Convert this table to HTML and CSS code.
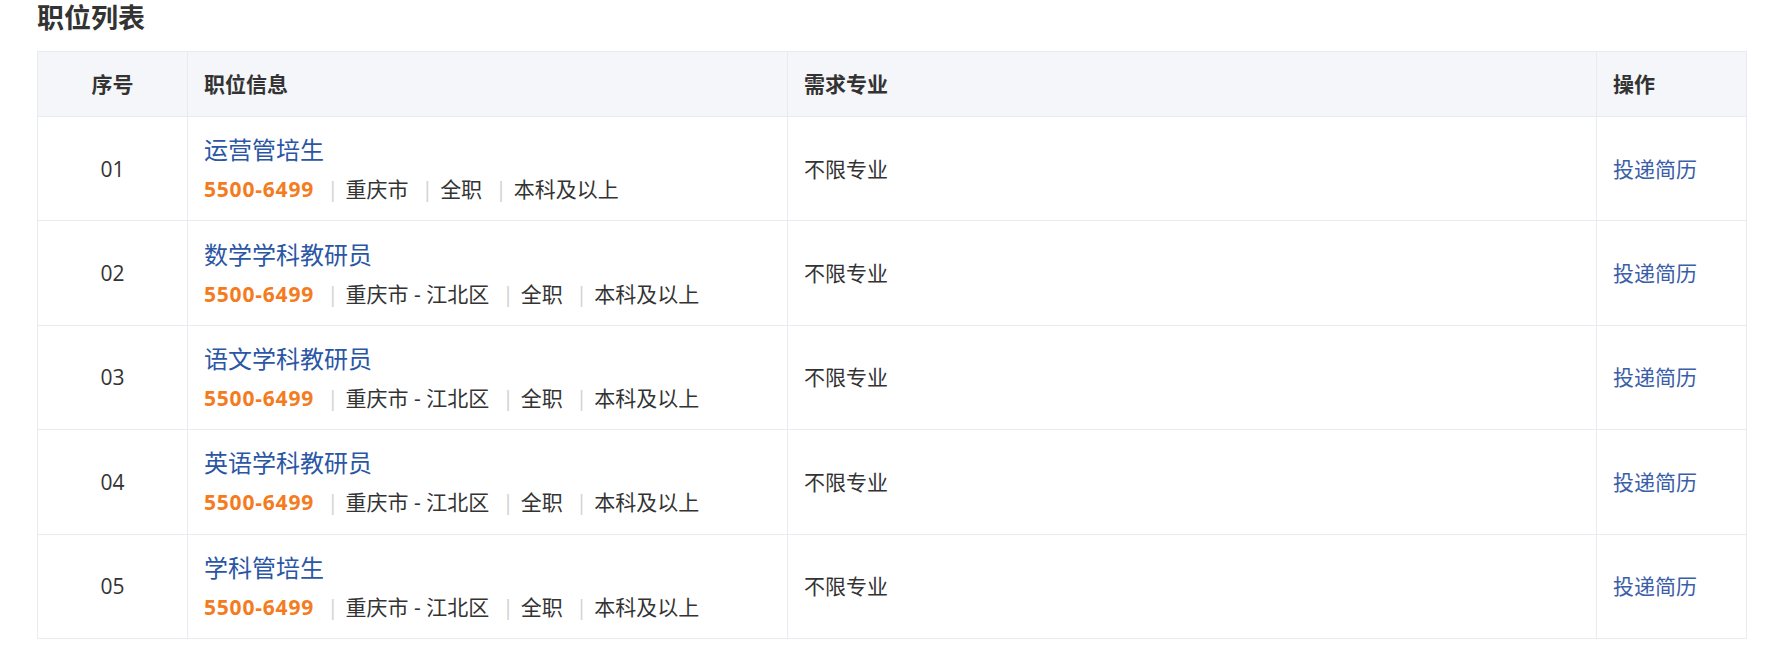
FILE: index.html
```html
<!DOCTYPE html>
<html lang="zh-CN">
<head>
<meta charset="utf-8">
<title>职位列表</title>
<link rel="stylesheet" href="styles.css">
</head>
<body>
<div class="page">
  <h2 class="page-title">职位列表</h2>
  <table class="job-table">
    <colgroup>
      <col class="col-no">
      <col class="col-info">
      <col class="col-major">
      <col class="col-op">
    </colgroup>
    <thead>
      <tr>
        <th class="cell-no">序号</th>
        <th>职位信息</th>
        <th>需求专业</th>
        <th>操作</th>
      </tr>
    </thead>
    <tbody>
      <tr>
        <td class="cell-no">01</td>
        <td>
          <div class="job-name">运营管培生</div>
          <div class="job-meta"><span class="salary">5500-6499</span><span class="sep">|</span><span>重庆市</span><span class="sep">|</span><span>全职</span><span class="sep">|</span><span>本科及以上</span></div>
        </td>
        <td>不限专业</td>
        <td><a class="apply" href="#">投递简历</a></td>
      </tr>
      <tr>
        <td class="cell-no">02</td>
        <td>
          <div class="job-name">数学学科教研员</div>
          <div class="job-meta"><span class="salary">5500-6499</span><span class="sep">|</span><span>重庆市 - 江北区</span><span class="sep">|</span><span>全职</span><span class="sep">|</span><span>本科及以上</span></div>
        </td>
        <td>不限专业</td>
        <td><a class="apply" href="#">投递简历</a></td>
      </tr>
      <tr>
        <td class="cell-no">03</td>
        <td>
          <div class="job-name">语文学科教研员</div>
          <div class="job-meta"><span class="salary">5500-6499</span><span class="sep">|</span><span>重庆市 - 江北区</span><span class="sep">|</span><span>全职</span><span class="sep">|</span><span>本科及以上</span></div>
        </td>
        <td>不限专业</td>
        <td><a class="apply" href="#">投递简历</a></td>
      </tr>
      <tr>
        <td class="cell-no">04</td>
        <td>
          <div class="job-name">英语学科教研员</div>
          <div class="job-meta"><span class="salary">5500-6499</span><span class="sep">|</span><span>重庆市 - 江北区</span><span class="sep">|</span><span>全职</span><span class="sep">|</span><span>本科及以上</span></div>
        </td>
        <td>不限专业</td>
        <td><a class="apply" href="#">投递简历</a></td>
      </tr>
      <tr>
        <td class="cell-no">05</td>
        <td>
          <div class="job-name">学科管培生</div>
          <div class="job-meta"><span class="salary">5500-6499</span><span class="sep">|</span><span>重庆市 - 江北区</span><span class="sep">|</span><span>全职</span><span class="sep">|</span><span>本科及以上</span></div>
        </td>
        <td>不限专业</td>
        <td><a class="apply" href="#">投递简历</a></td>
      </tr>
    </tbody>
  </table>
</div>
</body>
</html>
```

FILE: styles.css
```css
html, body {
  margin: 0;
  padding: 0;
  background: #ffffff;
}

body {
  font-family: "Open Sans", "Noto Sans CJK SC", sans-serif;
  color: #333333;
  font-size: 21px;
}

.page {
  padding: 0 0 0 37px;
}

.page-title {
  margin: 0;
  font-size: 27px;
  line-height: 36px;
  font-weight: 700;
  color: #333333;
}

.job-table {
  margin-top: 15px;
  width: 1709px;
  table-layout: fixed;
  border-collapse: collapse;
  border: 1px solid #e9ebf1;
}

.col-no { width: 150px; }
.col-info { width: 600px; }
.col-major { width: 809px; }
.col-op { width: 150px; }

.job-table th,
.job-table td {
  border: 1px solid #e9ebf1;
  padding: 0 16px;
  text-align: left;
  vertical-align: middle;
  line-height: 30px;
}

.job-table thead tr {
  height: 65px;
  background: #f5f6fa;
}

.job-table th {
  font-weight: 700;
  color: #333333;
  font-size: 21px;
}

.job-table tbody tr {
  height: 104.4px;
}

.job-table .cell-no {
  text-align: center;
}

.job-name {
  font-size: 24px;
  line-height: 36px;
  color: #2a56a5;
}

.job-meta {
  margin-top: 5px;
  line-height: 32px;
  color: #333333;
}

.salary {
  color: #f47b1e;
  font-weight: 700;
  letter-spacing: 0.8px;
}

.sep {
  color: #d2d2d2;
  margin: 0 7px 0 13px;
}

.apply {
  color: #3b5ea8;
  text-decoration: none;
}
```
